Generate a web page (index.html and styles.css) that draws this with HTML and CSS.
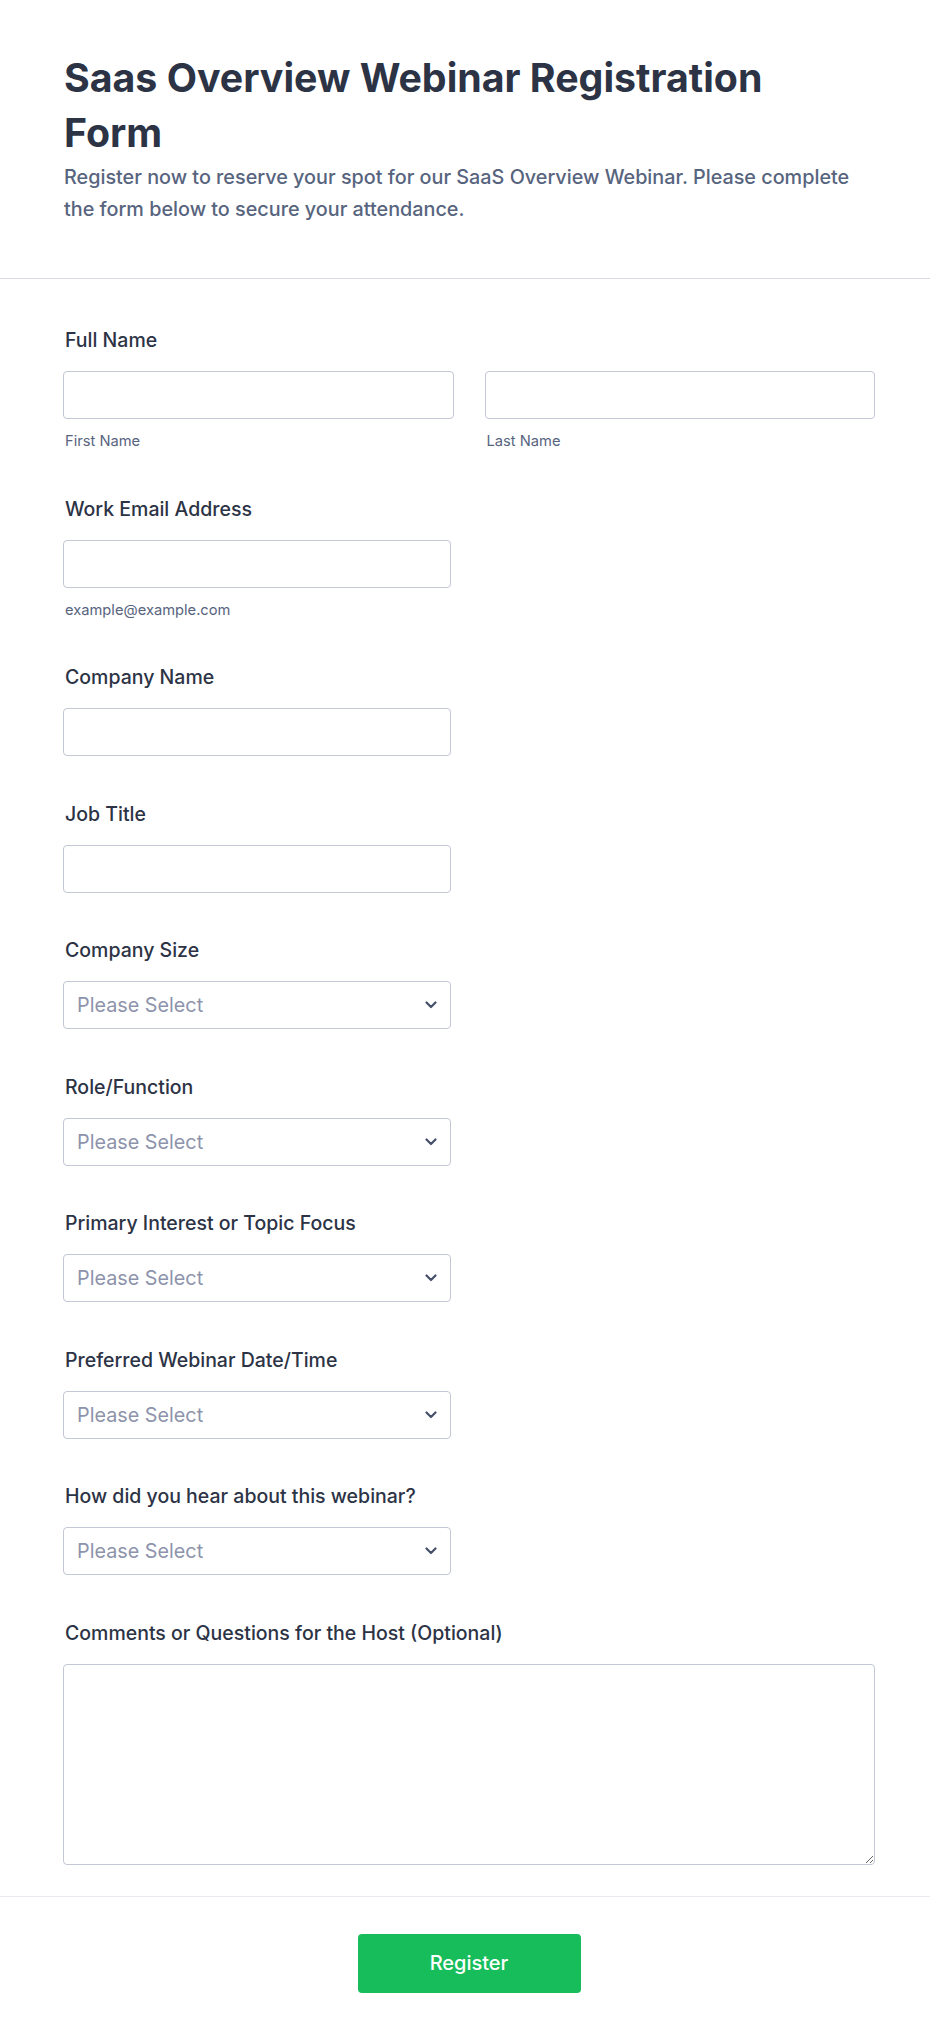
FILE: index.html
```html
<!DOCTYPE html>
<html lang="en">
<head>
    <meta charset="UTF-8">
    <meta name="viewport" content="width=device-width, initial-scale=1.0">
    <title>Saas Overview Webinar Registration Form</title>
    <link rel="stylesheet" href="styles.css">
</head>
<body>
    <form class="form-all" id="webinarForm">
        <div class="form-header">
            <h1>Saas Overview Webinar Registration Form</h1>
            <p class="form-desc">Register now to reserve your spot for our SaaS Overview Webinar. Please complete the form below to secure your attendance.</p>
        </div>

        <ul class="form-fields">
            <li class="field">
                <label class="field-label">Full Name</label>
                <div class="name-row">
                    <div class="name-part">
                        <input type="text" id="firstName" class="text-input">
                        <span class="sublabel">First Name</span>
                    </div>
                    <div class="name-part">
                        <input type="text" id="lastName" class="text-input">
                        <span class="sublabel">Last Name</span>
                    </div>
                </div>
            </li>
            <li class="field">
                <label class="field-label" for="email">Work Email Address</label>
                <input type="email" id="email" class="text-input half">
                <span class="sublabel">example@example.com</span>
            </li>
            <li class="field">
                <label class="field-label" for="company">Company Name</label>
                <input type="text" id="company" class="text-input half">
            </li>
            <li class="field">
                <label class="field-label" for="jobTitle">Job Title</label>
                <input type="text" id="jobTitle" class="text-input half">
            </li>
            <li class="field">
                <label class="field-label" for="companySize">Company Size</label>
                <div class="select-wrap half">
                    <select id="companySize" class="dropdown"><option value="">Please Select</option></select>
                    <svg class="chevron" viewBox="0 0 12 8" width="12" height="8"><path d="M1.5 1.5 6 6l4.5-4.5" fill="none" stroke="#475069" stroke-width="2.2" stroke-linecap="round" stroke-linejoin="round"/></svg>
                </div>
            </li>
            <li class="field">
                <label class="field-label" for="role">Role/Function</label>
                <div class="select-wrap half">
                    <select id="role" class="dropdown"><option value="">Please Select</option></select>
                    <svg class="chevron" viewBox="0 0 12 8" width="12" height="8"><path d="M1.5 1.5 6 6l4.5-4.5" fill="none" stroke="#475069" stroke-width="2.2" stroke-linecap="round" stroke-linejoin="round"/></svg>
                </div>
            </li>
            <li class="field">
                <label class="field-label" for="interest">Primary Interest or Topic Focus</label>
                <div class="select-wrap half">
                    <select id="interest" class="dropdown"><option value="">Please Select</option></select>
                    <svg class="chevron" viewBox="0 0 12 8" width="12" height="8"><path d="M1.5 1.5 6 6l4.5-4.5" fill="none" stroke="#475069" stroke-width="2.2" stroke-linecap="round" stroke-linejoin="round"/></svg>
                </div>
            </li>
            <li class="field">
                <label class="field-label" for="dateTime">Preferred Webinar Date/Time</label>
                <div class="select-wrap half">
                    <select id="dateTime" class="dropdown"><option value="">Please Select</option></select>
                    <svg class="chevron" viewBox="0 0 12 8" width="12" height="8"><path d="M1.5 1.5 6 6l4.5-4.5" fill="none" stroke="#475069" stroke-width="2.2" stroke-linecap="round" stroke-linejoin="round"/></svg>
                </div>
            </li>
            <li class="field">
                <label class="field-label" for="source">How did you hear about this webinar?</label>
                <div class="select-wrap half">
                    <select id="source" class="dropdown"><option value="">Please Select</option></select>
                    <svg class="chevron" viewBox="0 0 12 8" width="12" height="8"><path d="M1.5 1.5 6 6l4.5-4.5" fill="none" stroke="#475069" stroke-width="2.2" stroke-linecap="round" stroke-linejoin="round"/></svg>
                </div>
            </li>
            <li class="field field-last">
                <label class="field-label" for="comments">Comments or Questions for the Host (Optional)</label>
                <textarea id="comments" class="text-area"></textarea>
            </li>
        </ul>

        <div class="form-footer">
            <button type="button" class="submit-btn">Register</button>
        </div>
    </form>
</body>
</html>
```

FILE: styles.css
```css
* { box-sizing: border-box; }
body { margin: 0; background-color: #fff; font-family: Inter, "Noto Sans", Arial, sans-serif; color: #2c3345; }
.form-all { width: 930px; }

.form-header { padding: 50px 55px 53px 64px; border-bottom: 1px solid #d8dae3; }
.form-header h1 { margin: 0; max-width: 740px; font-size: 39.3px; line-height: 55px; font-weight: 700; color: #2c3345; }
.form-desc { margin: 1px 0 0; max-width: 800px; font-size: 19.8px; line-height: 32px; font-weight: 500; color: #57647e; }

.form-fields { list-style: none; margin: 0; padding: 49px 55px 0 63px; }
.field { padding-bottom: 45.5px; }
.field-last { padding-bottom: 31px; }
.field-label { display: block; margin: 0 0 19px 2px; font-size: 19.5px; line-height: 24px; font-weight: 500; color: #2c3345; }

.name-row { display: flex; gap: 31px; }
.name-part { flex: 1; }
.sublabel { display: block; margin: 12px 0 0 2px; font-size: 14.7px; line-height: 20px; color: #57647e; }

.text-input, .dropdown, .text-area { display: block; width: 100%; height: 48px; border: 1px solid #c3c7d6; border-radius: 4px; background-color: #fff; font-family: inherit; font-size: 19.8px; color: #2c3345; }
.half { width: 388px; }
.text-input { padding: 0 12px; }

.select-wrap { position: relative; }
.dropdown { padding: 0 40px 0 13px; color: #8d93ab; -webkit-appearance: none; appearance: none; }
.chevron { position: absolute; right: 14px; top: 20px; pointer-events: none; }

.text-area { height: 201px; padding: 10px 12px; resize: both; }

.form-footer { border-top: 1px solid #e8eaf0; padding: 37px 0 50px 8px; display: flex; justify-content: center; }
.submit-btn { width: 223px; height: 59px; border: none; border-radius: 4px; background-color: #18bd5b; color: #fff; font-family: inherit; font-size: 20px; font-weight: 500; cursor: pointer; }
```
